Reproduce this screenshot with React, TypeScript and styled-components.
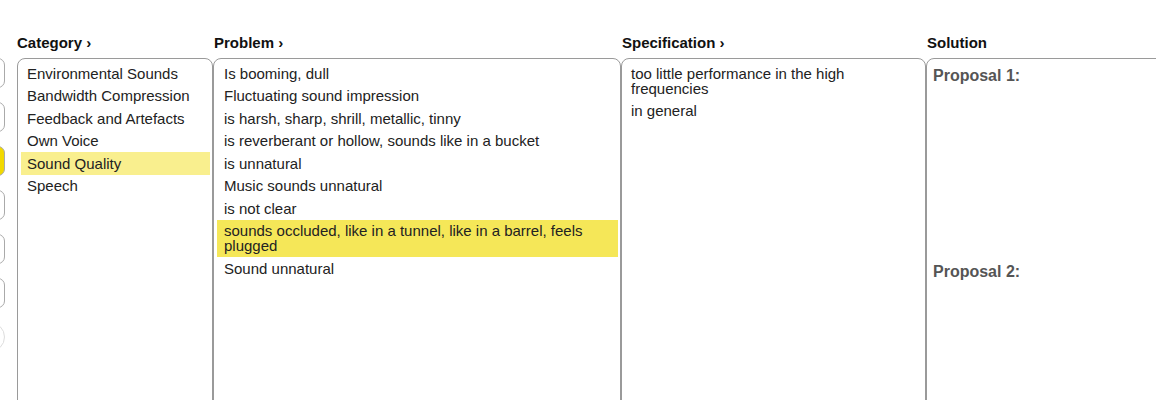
import styled, { createGlobalStyle } from 'styled-components'

const GlobalStyle = createGlobalStyle`
	html, body {
		margin: 0;
		padding: 0;
		overflow: hidden;
		background: #fff;
	}
	body {
		font-family: 'Liberation Sans', Arial, sans-serif;
		color: #222;
	}
`

const Page = styled.div`
	display: flex;
	align-items: flex-start;
	gap: 12px;
	padding-top: 35px;
	width: 1200px;
`

const Rail = styled.div`
	display: flex;
	flex-direction: column;
	gap: 14px;
	margin-left: -31px;
	padding-top: 23px;
	width: 36px;
`

const RailButton = styled.div<{ $active?: boolean; $round?: boolean }>`
	height: 30px;
	border: 1px solid ${props => (props.$round ? '#ddd' : '#aaa')};
	border-radius: ${props => (props.$round ? '15px' : '7px')};
	background: ${props => (props.$active ? '#f2d900' : '#fff')};
	box-sizing: border-box;
`

const Columns = styled.div`
	display: flex;
`

const Column = styled.div<{ $width: number }>`
	width: ${props => props.$width}px;
	display: flex;
	flex-direction: column;
`

const Heading = styled.div<{ $indent?: boolean }>`
	font-weight: 700;
	font-size: 15px;
	line-height: 16px;
	color: #111;
	margin-bottom: 7px;
	padding-left: ${props => (props.$indent ? '1px' : '0')};
`

const Box = styled.div`
	height: 360px;
	border: 1px solid #9a9a9a;
	border-radius: 8px;
	padding: 3px 2px 4px 3px;
	box-sizing: border-box;
`

const Item = styled.div<{ $tone?: 'soft' | 'strong'; $inset?: number }>`
	font-size: 15px;
	line-height: 15px;
	padding: 3.75px 6px 3.75px ${props => props.$inset ?? 6}px;
	color: #222;
	background: ${props =>
		props.$tone === 'strong' ? '#f5e758' : props.$tone === 'soft' ? '#f9ef8e' : 'transparent'};
`

const SolutionBox = styled(Box)`
	padding: 7px 6px;
	display: flex;
	flex-direction: column;
	gap: 177px;
`

const Proposal = styled.div`
	font-size: 16px;
	font-weight: 700;
	line-height: 19px;
	color: #555;
`

const categories = [
	'Environmental Sounds',
	'Bandwidth Compression',
	'Feedback and Artefacts',
	'Own Voice',
	'Sound Quality',
	'Speech',
]

const problems = [
	'Is booming, dull',
	'Fluctuating sound impression',
	'is harsh, sharp, shrill, metallic, tinny',
	'is reverberant or hollow, sounds like in a bucket',
	'is unnatural',
	'Music sounds unnatural',
	'is not clear',
	'sounds occluded, like in a tunnel, like in a barrel, feels plugged',
	'Sound unnatural',
]

const specs = ['too little performance in the high frequencies', 'in general']

export default function App() {
	return (
		<>
			<GlobalStyle />
			<Page>
				<Rail>
					<RailButton />
					<RailButton />
					<RailButton $active />
					<RailButton />
					<RailButton />
					<RailButton />
					<RailButton $round />
				</Rail>
				<Columns>
					<Column $width={196}>
						<Heading>Category ›</Heading>
						<Box>
							{categories.map(c => (
								<Item key={c} $tone={c === 'Sound Quality' ? 'soft' : undefined}>
									{c}
								</Item>
							))}
						</Box>
					</Column>
					<Column $width={408}>
						<Heading $indent>Problem ›</Heading>
						<Box>
							{problems.map((p, i) => (
								<Item key={p} $inset={7} $tone={i === 7 ? 'strong' : undefined}>
									{p}
								</Item>
							))}
						</Box>
					</Column>
					<Column $width={305}>
						<Heading $indent>Specification ›</Heading>
						<Box>
							{specs.map(s => (
								<Item key={s}>{s}</Item>
							))}
						</Box>
					</Column>
					<Column $width={240}>
						<Heading $indent>Solution</Heading>
						<SolutionBox>
							<Proposal>Proposal 1:</Proposal>
							<Proposal>Proposal 2:</Proposal>
						</SolutionBox>
					</Column>
				</Columns>
			</Page>
		</>
	)
}
